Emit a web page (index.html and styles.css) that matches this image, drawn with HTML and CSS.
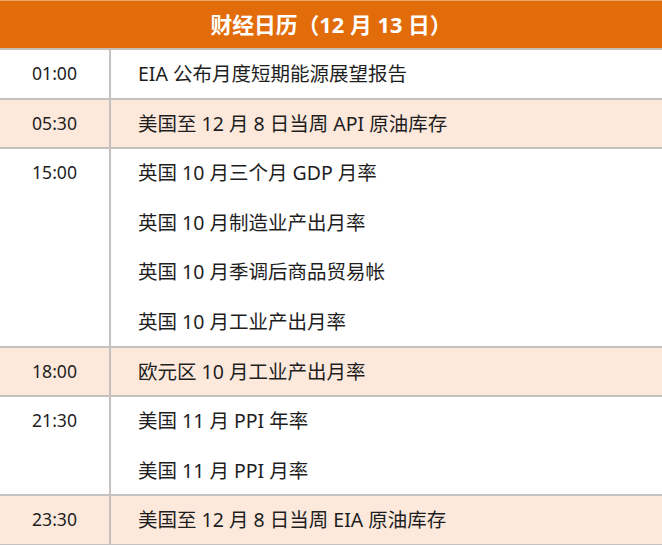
FILE: index.html
```html
<!DOCTYPE html>
<html lang="zh-CN">
<head>
<meta charset="utf-8">
<link rel="stylesheet" href="styles.css">
</head>
<body>
<div class="cal">
  <div class="head">财经日历（12 月 13 日）</div>
  <div class="row">
    <div class="time">01:00</div>
    <div class="events"><div class="line">EIA 公布月度短期能源展望报告</div></div>
  </div>
  <div class="row alt">
    <div class="time">05:30</div>
    <div class="events"><div class="line">美国至 12 月 8 日当周 API 原油库存</div></div>
  </div>
  <div class="row">
    <div class="time">15:00</div>
    <div class="events">
      <div class="line">英国 10 月三个月 GDP 月率</div>
      <div class="line">英国 10 月制造业产出月率</div>
      <div class="line">英国 10 月季调后商品贸易帐</div>
      <div class="line">英国 10 月工业产出月率</div>
    </div>
  </div>
  <div class="row alt">
    <div class="time">18:00</div>
    <div class="events"><div class="line">欧元区 10 月工业产出月率</div></div>
  </div>
  <div class="row">
    <div class="time">21:30</div>
    <div class="events">
      <div class="line">美国 11 月 PPI 年率</div>
      <div class="line">美国 11 月 PPI 月率</div>
    </div>
  </div>
  <div class="row alt">
    <div class="time">23:30</div>
    <div class="events"><div class="line">美国至 12 月 8 日当周 EIA 原油库存</div></div>
  </div>
</div>
</body>
</html>
```
FILE: styles.css
```css
html, body {
  margin: 0;
  padding: 0;
  background: #ffffff;
}
body {
  font-family: "Noto Sans", "Noto Sans CJK SC", sans-serif;
  color: #1e1e1e;
  font-size: 19.5px;
}
.cal {
  width: 662px;
}
.head {
  height: 47px;
  line-height: 47px;
  border-top: 1px solid #eaa46c;
  border-bottom: 2px solid #c6bfb8;
  background: #e26b0a;
  color: #ffffff;
  font-weight: bold;
  font-size: 21.8px;
  text-align: center;
}
.row {
  display: flex;
  border-bottom: 2px solid #c4c1bf;
}
.row.alt {
  background: #fce9dc;
}
.time {
  width: 109px;
  flex: none;
  border-right: 2px solid #c4c1bf;
  text-align: center;
  line-height: 47.6px;
  font-size: 17.6px;
}
.events {
  flex: 1;
  padding-left: 27px;
  display: flex;
  flex-direction: column;
  gap: 2px;
}
.line {
  height: 47.6px;
  line-height: 47.6px;
}
```
